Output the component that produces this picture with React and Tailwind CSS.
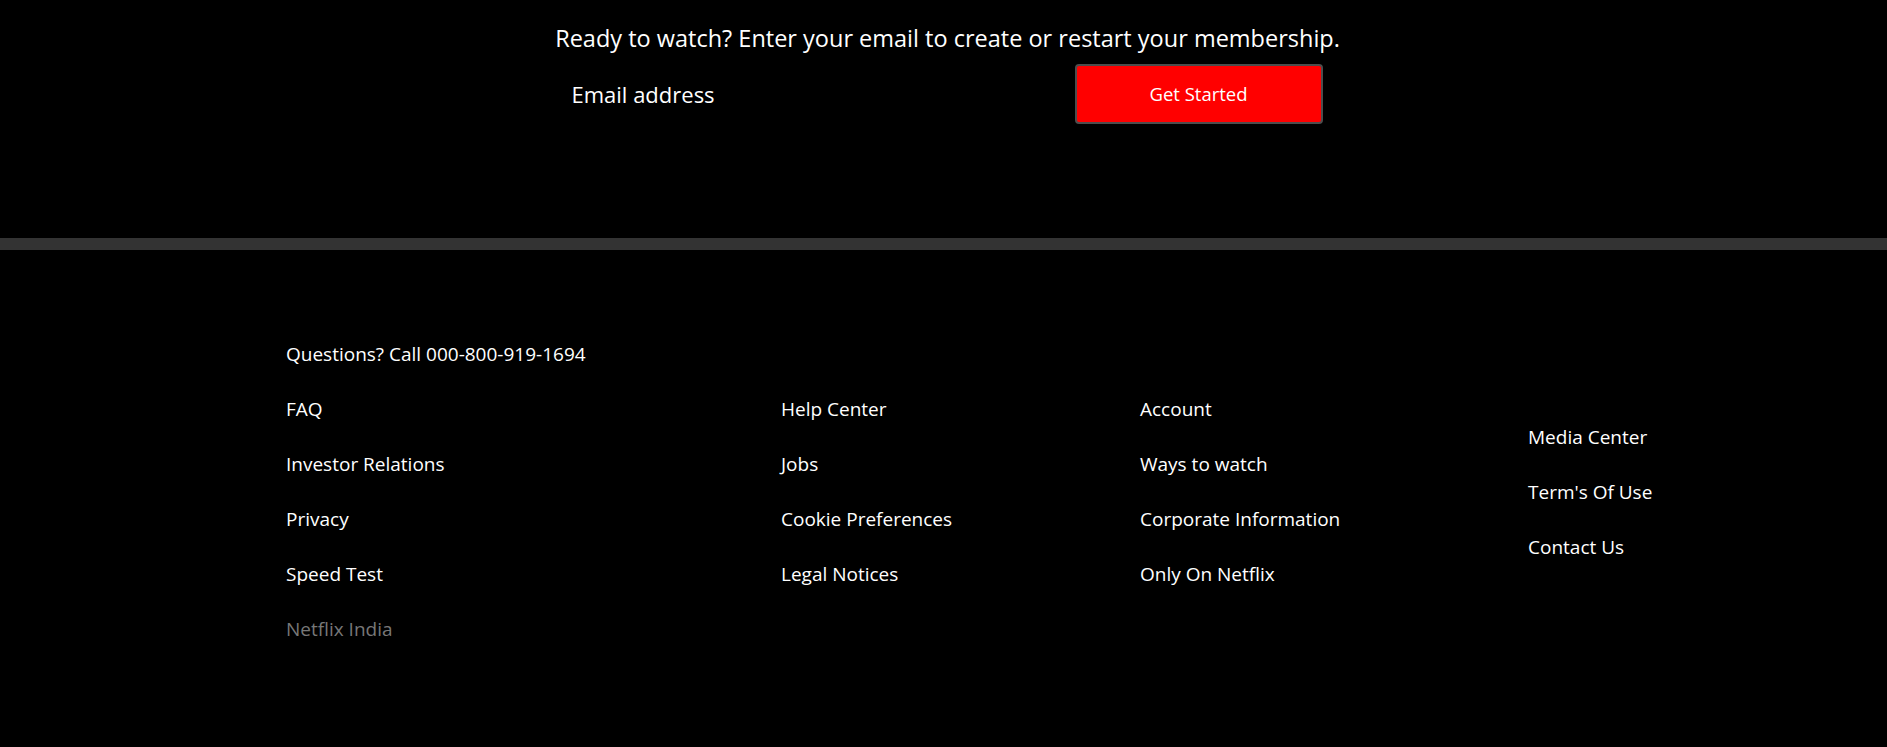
import React from 'react'

const columns = [
  { width: 'w-[495px]', items: ['FAQ', 'Investor Relations', 'Privacy', 'Speed Test'] },
  { width: 'w-[359px]', items: ['Help Center', 'Jobs', 'Cookie Preferences', 'Legal Notices'] },
  { width: 'w-[388px]', items: ['Account', 'Ways to watch', 'Corporate Information', 'Only On Netflix'] },
  { width: 'w-[200px]', items: ['Media Center', "Term's Of Use", 'Contact Us'] }
]

const App = () => {
  return (
    <div className="min-h-[747px] bg-black text-white font-['Open_Sans',sans-serif]">
      {/* sign up strip */}
      <section className="h-[238px] pt-[22px] flex flex-col items-center">
        <h3 className="ml-[8px] text-[23.5px] leading-[32px]">
          Ready to watch? Enter your email to create or restart your membership.
        </h3>
        <form className="mt-[10px] flex items-center" onSubmit={e => e.preventDefault()}>
          <input
            type="email"
            placeholder="Email address"
            className="w-[510px] h-[60px] px-[7px] bg-transparent text-[22px] text-white placeholder:text-white outline-none"
          />
          <button
            type="submit"
            className="w-[248px] h-[60px] rounded-[4px] border-2 border-[#4d4d4d] bg-[#ff0000] text-[18.5px] text-white"
          >
            Get Started
          </button>
        </form>
      </section>

      <div className="h-[12px] bg-[#333333]" />

      <footer className="pl-[286px] pt-[92px] pb-[80px]">
        <p className="text-[19px] leading-[24px]">Questions? Call 000-800-919-1694</p>
        <div className="mt-[31px] flex items-center">
          {columns.map((col, i) => (
            <ul key={i} className={`${col.width} flex flex-col gap-[31px]`}>
              {col.items.map(item => (
                <li key={item} className="text-[19px] leading-[24px]">
                  <a href="#">{item}</a>
                </li>
              ))}
            </ul>
          ))}
        </div>
        <p className="mt-[31px] text-[19px] leading-[24px] text-[#777777]">Netflix India</p>
      </footer>
    </div>
  )
}

export default App
